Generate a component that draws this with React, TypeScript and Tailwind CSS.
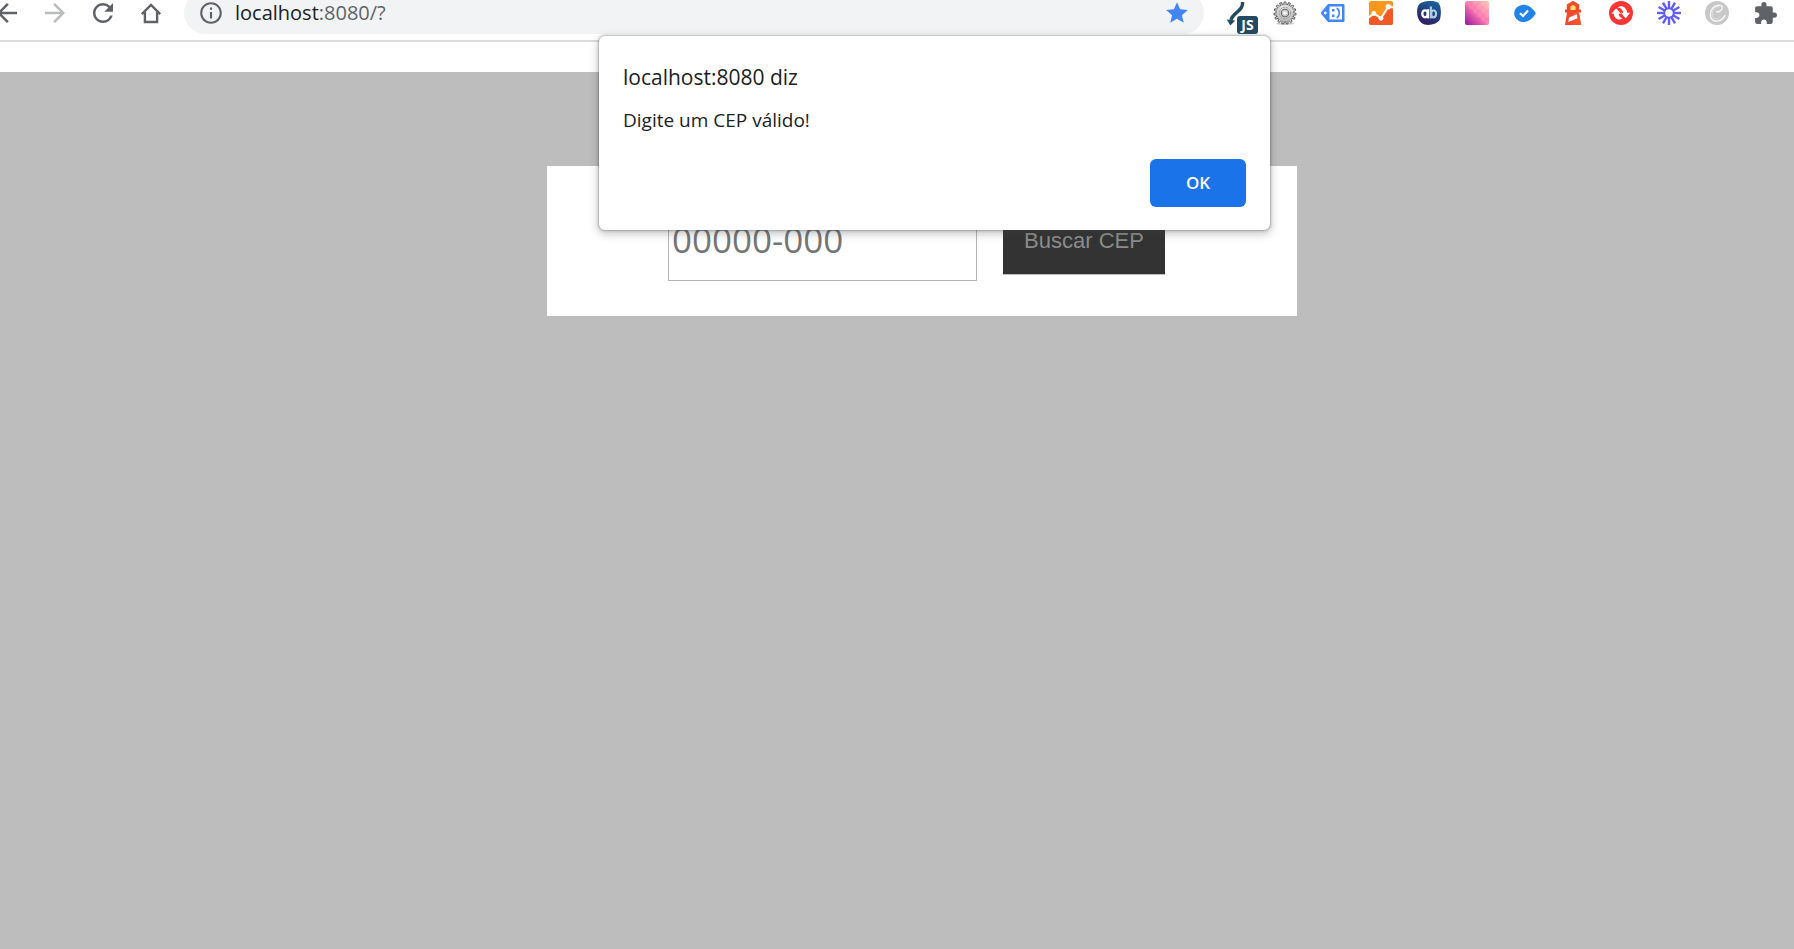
import type { ReactNode } from "react";
import {
  MdArrowBack,
  MdArrowForward,
  MdExtension,
  MdOutlineInfo,
  MdRefresh,
  MdStar,
} from "react-icons/md";

function ToolButton({ label, children }: { label: string; children: ReactNode }) {
  return (
    <button
      type="button"
      aria-label={label}
      className="flex h-6 w-6 shrink-0 items-center justify-center text-[#5f6368]"
    >
      {children}
    </button>
  );
}

function HomeIcon() {
  return (
    <svg viewBox="0 0 24 24" className="h-6 w-6 shrink-0" fill="none" stroke="currentColor" strokeWidth="2.4">
      <path d="M2.8 13.2 L12 4 L21.2 13.2" />
      <path d="M5.9 10.8 V21 H18.1 V10.8" />
    </svg>
  );
}

function ScriptIcon() {
  return (
    <span className="relative block h-6 w-6">
      <svg viewBox="0 0 24 24" className="h-6 w-6" fill="none" stroke="#234a63">
        <path d="M17.6 1 C17.7 5.5 16.300 7.5 12.300 11 C8.800 14 6.800 15.500 6 19" strokeWidth="3.400" />
        <path d="M1.800 18.500 L10.200 19.500 L5.400 24.500 Z" fill="#234a63" stroke="none" />
      </svg>
      <span className="absolute left-3 top-[15px] flex h-[18px] w-[21px] items-center justify-center rounded-[3px] bg-[#234a63] font-['Noto_Sans',sans-serif] text-[14px] font-bold leading-[18px] text-white">
        JS
      </span>
    </span>
  );
}

const TEETH = [0, 24, 48, 72, 96, 120, 144, 168, 192, 216, 240, 264, 288, 312, 336];

function GearIcon() {
  return (
    <svg viewBox="0 0 24 24" className="h-6 w-6">
      <defs>
        <linearGradient id="gear" x1="0" y1="0" x2="0" y2="1">
          <stop offset="0" stopColor="#e2e2e2" />
          <stop offset="1" stopColor="#b8b8b8" />
        </linearGradient>
      </defs>
      <ellipse cx="12" cy="22.600" rx="9" ry="1.300" fill="#c9c9c9" />
      {TEETH.map((a) => (
        <path
          key={a}
          d="M10.600 4 L11.200 0.900 H12.800 L13.400 4 Z"
          fill="#d0d0d0"
          stroke="#5c5c5c"
          strokeWidth="0.900"
          transform={`rotate(${a} 12 12)`}
        />
      ))}
      <circle cx="12" cy="12" r="8.600" fill="url(#gear)" />
      <circle cx="12" cy="12" r="5.700" fill="none" stroke="#999" strokeWidth="0.900" strokeDasharray="2 1" />
      <circle cx="12" cy="12" r="3.700" fill="#cfcfcf" stroke="#6b6b6b" strokeWidth="1.100" />
      <circle cx="12" cy="12" r="2.100" fill="#fff" stroke="#aaa" strokeWidth="0.500" />
    </svg>
  );
}

function TagIcon() {
  return (
    <svg viewBox="0 0 24 24" className="h-6 w-6">
      <path d="M7 3 H22.500 Q23.500 3 23.500 4 V20 Q23.500 21 22.500 21 H7 L0.300 13 Q-0.300 12 0.300 11 Z" fill="#4285f4" />
      <path d="M8.500 5.500 H21 V18.500 H8.500 Z" fill="#fff" />
      <circle cx="4.300" cy="12" r="1.400" fill="#fff" />
      <path d="M11 8 H13.500 V10.500 H11 Z M11 13.500 H13.500 V16 H11 Z" fill="#4285f4" />
      <path d="M15.500 7.700 H16.500 Q18.300 9 18.300 12 T16.500 16.400 H15.500" fill="none" stroke="#4285f4" strokeWidth="1.700" />
    </svg>
  );
}

function AnalyticsIcon() {
  return (
    <svg viewBox="0 0 24 24" className="h-6 w-6">
      <rect width="24" height="24" rx="2" fill="#f9971c" />
      <path d="M0 17 L5 13 L12 17.500 L19.500 6 L24 6 V22 Q24 24 22 24 H2 Q0 24 0 22 Z" fill="#f15a24" />
      <path d="M-1 17 L5 12.500 L12 17.300 L19.500 5.500 L24 6.500" fill="none" stroke="#fff" strokeWidth="2" />
      <g fill="#fff">
        <circle cx="4.800" cy="12.500" r="2.400" />
        <circle cx="12" cy="17.300" r="2.400" />
        <circle cx="19.300" cy="5.800" r="2.700" />
      </g>
    </svg>
  );
}

function AbIcon() {
  return (
    <svg viewBox="0 0 24 24" className="h-6 w-6">
      <defs>
        <linearGradient id="ab" x1="0.700" y1="0" x2="0.300" y2="1">
          <stop offset="0" stopColor="#1c639d" />
          <stop offset="0.500" stopColor="#243c7c" />
          <stop offset="1" stopColor="#351c60" />
        </linearGradient>
      </defs>
      <path d="M5 1.600 C11 -0.600 18 -0.300 21.500 2 C24.500 5 24.300 14 23 18 C21.500 22.500 14 24.500 9 23.800 C3 23 0 17 0.100 11 C0.200 6 1.500 3 5 1.600 Z" fill="url(#ab)" />
      <g fill="none" strokeWidth="2.300">
        <ellipse cx="8" cy="12.800" rx="2.700" ry="3.500" stroke="#fff" />
        <path d="M11 8.200 V17.400" stroke="#fff" />
        <ellipse cx="16.600" cy="12.800" rx="2.500" ry="3.500" stroke="#a9cfe8" />
        <path d="M13.900 5.500 V17.400" stroke="#a9cfe8" />
      </g>
    </svg>
  );
}

const CELLS = [0, 1, 2, 3, 4, 5];

function PaletteIcon() {
  return (
    <svg viewBox="0 0 24 24" className="h-6 w-6">
      <defs>
        <linearGradient id="pal" x1="0" y1="1" x2="1" y2="0">
          <stop offset="0" stopColor="#9613a4" />
          <stop offset="0.500" stopColor="#fa75ad" />
          <stop offset="1" stopColor="#ffc8b4" />
        </linearGradient>
        <clipPath id="palClip">
          <rect width="24" height="24" rx="2" />
        </clipPath>
      </defs>
      <g clipPath="url(#palClip)">
        <rect width="24" height="24" fill="url(#pal)" />
        {CELLS.map((r) =>
          CELLS.map((c) => (
            <rect
              key={`${r}-${c}`}
              x={c * 4}
              y={r * 4}
              width="4"
              height="4"
              fill="#fff"
              opacity={(r + c) % 2 === 0 && c >= r - 1 ? 0.1 : 0}
            />
          )),
        )}
      </g>
    </svg>
  );
}

function CheckIcon() {
  return (
    <svg viewBox="0 0 24 24" className="h-6 w-6">
      <path d="M11 3.800 C15.500 3.800 19.500 7.500 22.300 11.300 Q22.900 12.300 22.300 13.300 C19.500 17.500 15.500 21 11 21 C5.500 21 1.200 17.200 1.200 12.400 C1.200 7.600 5.500 3.800 11 3.800 Z" fill="#2185e8" />
      <path d="M7 12.300 L10 15 L15 9.500" fill="none" stroke="#fff" strokeWidth="2.200" />
    </svg>
  );
}

function LighthouseIcon() {
  return (
    <svg viewBox="0 0 24 24" className="h-6 w-6">
      <path d="M12 -0.200 L18.200 3.500 V8.600 H20 V11.500 H18 L20 24 H4 L6 11.500 H4 V8.600 H5.800 V3.500 Z" fill="#f0492c" />
      <path d="M12 24 H20 L18 11.500 H12 Z" fill="#f9522f" />
      <path d="M9.500 9 V5.500 Q12 2.500 14.500 5.500 V9 Z" fill="#ffe36b" />
      <path d="M8 16.500 L15.800 13.300 L16.400 17.300 L7.300 21 Z" fill="#fff" />
    </svg>
  );
}

const SYNC_ARROW =
  "M2.600 12.800 L7 7.300 L12 12.800 H9.600 C9.800 15 11 16.500 13.500 17.500 C11.500 19.200 8.500 18.800 6.800 17.200 C5.300 15.900 4.900 14.500 4.900 12.800 Z";

function SyncIcon() {
  return (
    <svg viewBox="0 0 24 24" className="h-6 w-6">
      <circle cx="12" cy="12" r="12" fill="#fb3434" />
      <path
        d="M8.500 6.200 C11 4.600 14.500 5 16 7 C17.500 8.500 18 10 18.200 11.800 H21 L16.700 17.500 L12 11.800 H14.300 C14 9 12 7 8.500 6.200 Z"
        fill="#fff"
      />
      <path d={SYNC_ARROW} fill="#fff" />
    </svg>
  );
}

const RAYS = [0, 30, 60, 90, 120, 150, 180, 210, 240, 270, 300, 330];

function BurstIcon() {
  return (
    <svg viewBox="0 0 24 24" className="h-6 w-6" stroke="#625df5" strokeWidth="2.400">
      {RAYS.map((a) => (
        <path key={a} d="M12 0 V8" transform={`rotate(${a} 12 12)`} />
      ))}
      <circle cx="12" cy="12" r="4.800" fill="none" strokeWidth="2" />
    </svg>
  );
}

function SwirlIcon() {
  return (
    <svg viewBox="0 0 24 24" className="h-6 w-6" fill="none">
      <circle cx="12" cy="12" r="12" fill="#c8c8c8" />
      <path
        d="M11.500 10.500 C13 12 17.500 9.500 17.300 6.500 C17 3 10.500 3.500 7.500 7.500 C4.500 11.500 4.500 17.500 8.500 19.500 C13 21 17.500 18.500 20.300 14.500"
        stroke="#f5f5f5"
        strokeWidth="1.400"
        strokeLinecap="round"
      />
      <path d="M14.500 5.500 C10.500 5.500 7 10 7.200 14 C7.500 18 11 18.500 14.500 16.500" stroke="#e4e4e4" strokeWidth="0.800" />
    </svg>
  );
}

function Toolbar() {
  return (
    <header className="overflow-hidden border-b-2 border-[#dadbdc] bg-white pb-[6px]">
      <div className="-ml-[5px] -mt-2 flex h-[42px] items-center">
        <nav aria-label="Navegação" className="flex items-center gap-6">
          <ToolButton label="Voltar">
            <MdArrowBack className="h-[30px] w-[30px] shrink-0" />
          </ToolButton>
          <ToolButton label="Avançar">
            <MdArrowForward className="h-[30px] w-[30px] shrink-0 text-[#babcbe]" />
          </ToolButton>
          <ToolButton label="Recarregar">
            <MdRefresh className="h-[30px] w-[30px] shrink-0" />
          </ToolButton>
          <ToolButton label="Página inicial">
            <HomeIcon />
          </ToolButton>
        </nav>
        <div className="ml-[21px] flex h-full flex-1 items-center rounded-full bg-[#f1f3f4] pl-[14px] pr-[14px]">
          <MdOutlineInfo className="h-[26px] w-[26px] shrink-0 text-[#5f6368]" />
          <p className="ml-[11px] flex-1 font-['Open_Sans',sans-serif] text-[20px] leading-7 text-[#5f6368]">
            <span className="text-[#202124]">localhost</span>:8080/?
          </p>
          <button type="button" aria-label="Favorito" className="text-[#4285f4]">
            <MdStar className="h-[26px] w-[26px]" />
          </button>
        </div>
        <div className="ml-[21px] mr-[17px] flex items-center gap-6">
          <ToolButton label="Scripts"><ScriptIcon /></ToolButton>
          <ToolButton label="Ajustes"><GearIcon /></ToolButton>
          <ToolButton label="Etiquetas"><TagIcon /></ToolButton>
          <ToolButton label="Análise"><AnalyticsIcon /></ToolButton>
          <ToolButton label="Testes"><AbIcon /></ToolButton>
          <ToolButton label="Cores"><PaletteIcon /></ToolButton>
          <ToolButton label="Verificação"><CheckIcon /></ToolButton>
          <ToolButton label="Auditoria"><LighthouseIcon /></ToolButton>
          <ToolButton label="Sincronizar"><SyncIcon /></ToolButton>
          <ToolButton label="Gravação"><BurstIcon /></ToolButton>
          <ToolButton label="Conteúdo"><SwirlIcon /></ToolButton>
          <ToolButton label="Extensões">
            <MdExtension className="h-[25px] w-[25px] shrink-0" />
          </ToolButton>
        </div>
      </div>
    </header>
  );
}

function AlertDialog() {
  return (
    <div className="absolute inset-x-0 top-9 flex justify-center pl-[75px]">
      <section
        role="alertdialog"
        aria-labelledby="alert-title"
        aria-describedby="alert-text"
        className="w-full max-w-[671px] rounded-md bg-white px-6 pb-[23px] pt-[27px] font-['Open_Sans',sans-serif] text-[#202124] shadow-[0_0_2px_1px_rgba(60,64,67,0.3),0_3px_8px_1px_rgba(60,64,67,0.3)]"
      >
        <h1 id="alert-title" className="text-[21px] leading-7">localhost:8080 diz</h1>
        <p id="alert-text" className="mt-[17px] text-[19px] leading-6">Digite um CEP válido!</p>
        <div className="mt-[27px] flex justify-end">
          <button
            type="button"
            className="h-12 w-24 rounded-md bg-[#1a73e8] text-[17px] font-semibold leading-6 text-white"
          >
            OK
          </button>
        </div>
      </section>
    </div>
  );
}

export default function App() {
  return (
    <div className="relative flex min-h-screen flex-col bg-white">
      <Toolbar />
      <main className="mt-[30px] flex flex-1 items-start justify-center bg-[#bdbdbd] pl-[50px] pt-[94px]">
        <form
          className="flex h-[150px] w-full max-w-[750px] items-center justify-center gap-[26px] bg-white pr-[11px]"
          onSubmit={(e) => e.preventDefault()}
        >
          <input
            type="text"
            aria-label="CEP"
            placeholder="00000-000"
            className="h-20 w-[309px] border border-[#b5b5b5] bg-white px-[3px] pb-[3px] font-['Open_Sans',sans-serif] text-[35px] text-[#333] placeholder:text-[#757575]"
          />
          <button
            type="submit"
            className="h-[68px] w-[162px] border-b border-[#bdbdbd] bg-[#333] font-['Liberation_Sans',sans-serif] text-[22px] text-[#8c8c8c]"
          >
            Buscar CEP
          </button>
        </form>
      </main>
      <AlertDialog />
    </div>
  );
}
